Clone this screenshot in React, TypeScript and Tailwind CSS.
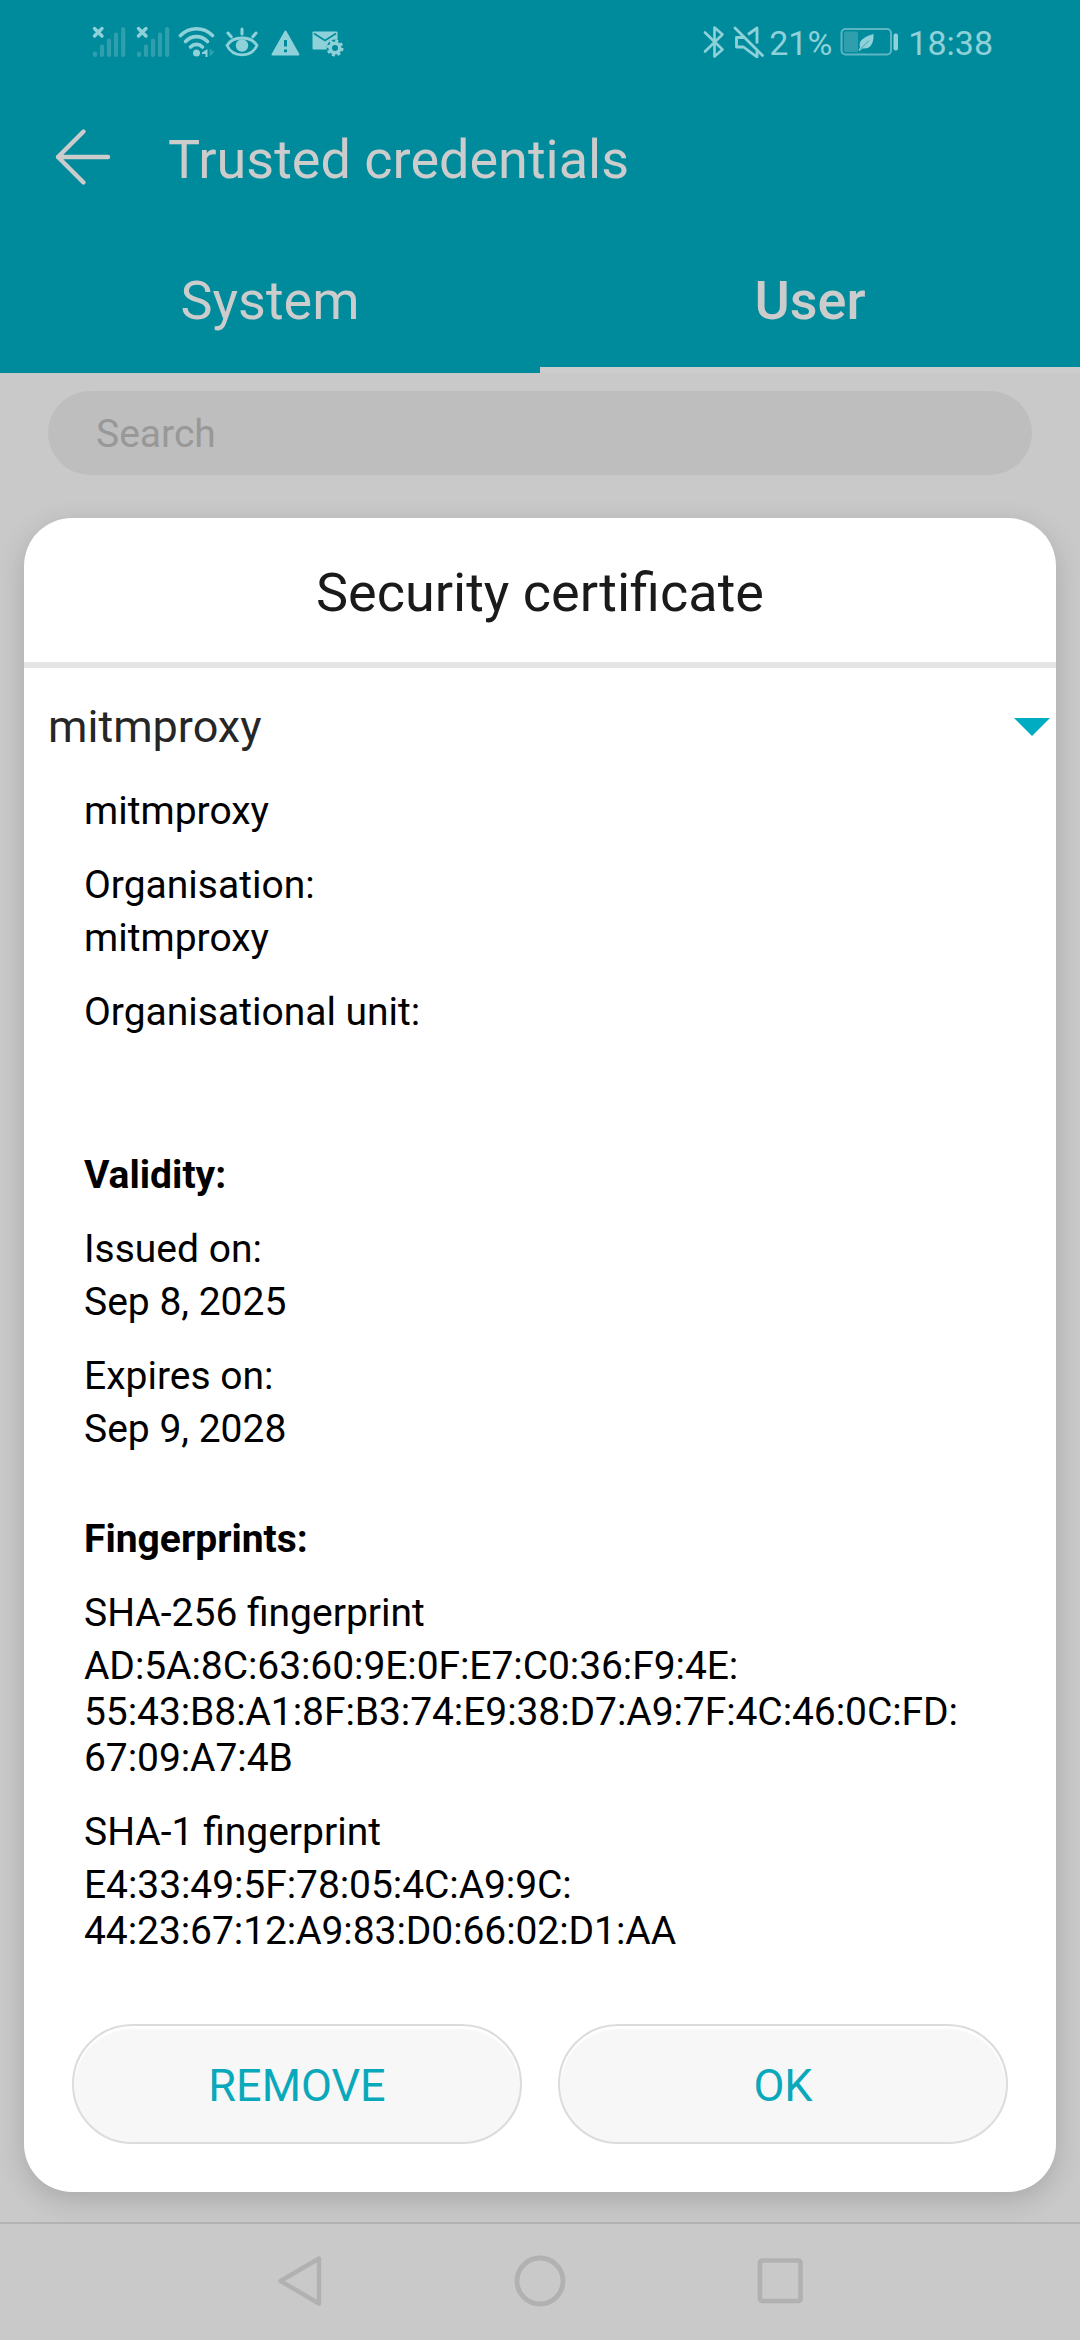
import type { ReactNode } from "react";

function SignalIcon() {
  return (
    <svg width="34" height="32" viewBox="0 0 34 32" fill="none" strokeLinecap="round">
      <path d="M2.5 2.5L10 10M10 2.5L2.5 10" stroke="#8fd1d9" strokeWidth="3.4" />
      <path d="M3 27.5V29M10 20.500V29M17 14.500V29M24 8.500V29M31.200 3V29" stroke="#2f9fae" strokeWidth="4.200" />
    </svg>
  );
}

function WifiIcon() {
  return (
    <svg width="38" height="32" viewBox="0 0 38 32" fill="none">
      <g stroke="#8fd1d9" strokeWidth="3.600" strokeLinecap="round">
        <path d="M2.500 9.500C11.500 0.500 25.500 0.500 34.500 9.500" />
        <path d="M7.500 15.500C14 9 23 9 29.500 15.500" />
        <path d="M12.500 21C16 17.500 21 17.500 24.500 21" />
      </g>
      <circle cx="18.500" cy="27" r="3.500" fill="#8fd1d9" />
      <path d="M29.500 23V31H27.500V28H24V26.500Z" fill="#8fd1d9" />
      <path d="M31.500 23V31L37 25H33.500V23Z" fill="#2f9fae" />
    </svg>
  );
}

function EyeIcon() {
  return (
    <svg width="34" height="30" viewBox="0 0 34 30" fill="none" stroke="#8fd1d9" strokeLinecap="round">
      <path d="M2 18.500C8 8.500 26 8.500 32 18.500C26 31 8 31 2 18.500Z" strokeWidth="2.800" strokeLinejoin="round" />
      <path d="M17 2V7M3 6L6.200 9.800M31 6L27.800 9.800" strokeWidth="3" />
      <circle cx="17" cy="18.500" r="6.200" fill="#8fd1d9" stroke="none" />
    </svg>
  );
}

function WarningIcon() {
  return (
    <svg width="29" height="26" viewBox="0 0 29 26">
      <path d="M14.500 1.500L27.500 24.500H1.500Z" fill="#8fd1d9" stroke="#8fd1d9" strokeWidth="2" strokeLinejoin="round" />
      <path d="M14.500 10V16.500M14.500 19.500V22.300" stroke="#008b9c" strokeWidth="3" />
    </svg>
  );
}

function MailGearIcon() {
  return (
    <svg width="32" height="26" viewBox="0 0 32 26" fill="none">
      <rect x="0.500" y="0.500" width="25" height="18" rx="1" fill="#8fd1d9" />
      <path d="M2 2.500L13 9.500L24 2.500" stroke="#008b9c" strokeWidth="1.600" />
      <circle cx="23" cy="17" r="8.500" fill="#008b9c" />
      <circle cx="23" cy="17" r="4.800" stroke="#8fd1d9" strokeWidth="3.600" />
      <circle cx="23" cy="17" r="7.200" stroke="#8fd1d9" strokeWidth="2.600" strokeDasharray="3 2.655" />
    </svg>
  );
}

function BluetoothIcon() {
  return (
    <svg width="22" height="34" viewBox="0 0 22 34" fill="none" stroke="#8fd1d9" strokeWidth="2.600" strokeLinejoin="round" strokeLinecap="round">
      <path d="M2 7.500L19.500 24.500L11.500 31.500V2.500L19.500 9.500L2 26.500" />
    </svg>
  );
}

function MutedIcon() {
  return (
    <svg width="32" height="32" viewBox="0 0 32 32" fill="none" stroke="#8fd1d9" strokeWidth="2.800">
      <path d="M2 2L29.500 29.500" strokeLinecap="round" />
      <path d="M11 11.500H3.500V21H10.500L24 31V25" strokeLinejoin="round" />
      <path d="M15 8.500L24 2V17.500" strokeLinejoin="round" />
    </svg>
  );
}

function BatteryIcon() {
  return (
    <svg width="60" height="30" viewBox="0 0 60 30" fill="none">
      <rect x="1.500" y="2" width="49.500" height="25.500" rx="4" stroke="#5cb6c1" strokeWidth="2" />
      <rect x="4" y="4.500" width="14" height="20.500" rx="1.500" fill="#2f9fae" />
      <path d="M33.500 7C34 17 30 22.500 22.500 21.500L19.500 24L18.500 23L20 20.500C18 13 25 9.500 33.500 7Z" fill="#8fd1d9" />
      <path d="M20 22.500L29 13.500" stroke="#3fa6b3" strokeWidth="1" />
      <rect x="53.500" y="6.500" width="4.500" height="17" rx="2" fill="#8fd1d9" />
    </svg>
  );
}

function StatusBar() {
  return (
    <div className="flex h-[84px] items-start justify-between text-[34px] leading-[40px] text-[#8fd1d9]">
      <div className="flex pl-[92px]">
        <div className="mt-[26px]"><SignalIcon /></div>
        <div className="mt-[26px] ml-[10px]"><SignalIcon /></div>
        <div className="mt-[26px] ml-[8px]"><WifiIcon /></div>
        <div className="mt-[27px] ml-[9px]"><EyeIcon /></div>
        <div className="mt-[30px] ml-[12px]"><WarningIcon /></div>
        <div className="mt-[31px] ml-[12px]"><MailGearIcon /></div>
      </div>
      <div className="flex pr-[87px]">
        <div className="mt-[25px]"><BluetoothIcon /></div>
        <div className="mt-[26px] ml-[8px]"><MutedIcon /></div>
        <span className="mt-[23px] ml-[4px]">21%</span>
        <div className="mt-[27px] ml-[8px]"><BatteryIcon /></div>
        <span className="mt-[23px] ml-[8px]">18:38</span>
      </div>
    </div>
  );
}

function Entry({ label, children }: { label?: string; children?: ReactNode }) {
  return (
    <div className="mb-[28px]">
      {label && <p className="pb-[7px]">{label}</p>}
      <div className="min-h-[46px]">{children}</div>
    </div>
  );
}

function PillButton({ children }: { children: ReactNode }) {
  return (
    <button className="flex h-[120px] flex-1 items-center justify-center rounded-full border-2 border-[#dcdcdc] bg-[#f7f7f7] pt-[4px] text-[45px] text-[#0aa8bb] shadow-[inset_0_3px_2px_#ffffff]">
      {children}
    </button>
  );
}

function CertificateDialog() {
  return (
    <section className="absolute top-[518px] left-[24px] flex h-[1674px] w-[1032px] flex-col rounded-[48px] bg-white shadow-[0_8px_28px_rgba(0,0,0,0.16)]">
      <h2 className="h-[150px] shrink-0 border-b-[6px] border-[#e5e5e5] pt-[43px] text-center text-[54px] leading-[64px] text-[#1a1a1a]">
        Security certificate
      </h2>
      <div className="flex h-[120px] shrink-0 items-start justify-between pt-[32px] pr-[6px] pl-[24px] text-[45px] leading-[53px] text-[#262626]">
        <span>mitmproxy</span>
        <svg className="mt-[18px]" width="36" height="18" viewBox="0 0 36 18">
          <path d="M0 0H36L18 18Z" fill="#00acc1" />
        </svg>
      </div>
      <div className="flex-1 px-[60px] text-[39px] leading-[46px] text-black">
        <Entry>mitmproxy</Entry>
        <Entry label="Organisation:">mitmproxy</Entry>
        <Entry label="Organisational unit:" />
        <h3 className="mt-[64px] mb-[28px] font-bold">Validity:</h3>
        <Entry label="Issued on:">Sep 8, 2025</Entry>
        <Entry label="Expires on:">Sep 9, 2028</Entry>
        <h3 className="mt-[64px] mb-[28px] font-bold">Fingerprints:</h3>
        <Entry label="SHA-256 fingerprint">
          <div className="tracking-[-0.08px]">
            AD:5A:8C:63:60:9E:0F:E7:C0:36:F9:4E:
            <br />
            55:43:B8:A1:8F:B3:74:E9:38:D7:A9:7F:4C:46:0C:FD:
            <br />
            67:09:A7:4B
          </div>
        </Entry>
        <Entry label="SHA-1 fingerprint">
          <div className="tracking-[-0.08px]">
            E4:33:49:5F:78:05:4C:A9:9C:
            <br />
            44:23:67:12:A9:83:D0:66:02:D1:AA
          </div>
        </Entry>
      </div>
      <div className="flex shrink-0 gap-[36px] px-[48px] pb-[48px]">
        <PillButton>REMOVE</PillButton>
        <PillButton>OK</PillButton>
      </div>
    </section>
  );
}

export default function App() {
  return (
    <div className="relative flex h-[2340px] w-[1080px] flex-col overflow-hidden bg-[#c9c9c9] font-['Roboto',sans-serif]">
      <header className="flex h-[373px] shrink-0 flex-col bg-[#008b9c] text-[#cccccc]">
        <StatusBar />
        <div className="flex h-[150px] items-start pl-[54px]">
          <svg className="mt-[44px]" width="58" height="58" viewBox="0 0 58 58" fill="none" stroke="#cccccc" strokeWidth="4.400" strokeLinecap="round" strokeLinejoin="round">
            <path d="M29.500 3.500L4 29L29.500 54.500M4 29H54" />
          </svg>
          <h1 className="mt-[44px] ml-[56px] text-[54px] leading-[64px]">Trusted credentials</h1>
        </div>
        <nav className="flex flex-1 text-center text-[54px] leading-[64px]">
          <div className="flex-1 pt-[35px]">System</div>
          <div className="flex-1 border-b-[6px] border-[#cccccc] pt-[35px] font-medium">User</div>
        </nav>
      </header>
      <main className="flex-1 px-[48px] pt-[18px]">
        <div className="flex h-[84px] items-center rounded-[42px] bg-[#bebebe] pt-[3px] pl-[48px] text-[39px] text-[#989898]">Search</div>
      </main>
      <footer className="flex h-[118px] shrink-0 border-t-2 border-[#b3b3b3] pt-[30px] pl-[276px]">
        <svg width="48" height="56" viewBox="0 0 48 56" fill="none" stroke="#b1b1b1" strokeWidth="4.400" strokeLinejoin="round">
          <path d="M4.500 27L43 4.500V49.500Z" />
        </svg>
        <svg className="ml-[188px]" width="56" height="56" viewBox="0 0 56 56" fill="none" stroke="#b1b1b1" strokeWidth="4.800">
          <circle cx="28" cy="27" r="23" />
        </svg>
        <svg className="ml-[184px]" width="56" height="56" viewBox="0 0 56 56" fill="none" stroke="#b1b1b1" strokeWidth="4.600">
          <rect x="8" y="6.500" width="40.500" height="40.500" rx="2" />
        </svg>
      </footer>
      <CertificateDialog />
    </div>
  );
}
